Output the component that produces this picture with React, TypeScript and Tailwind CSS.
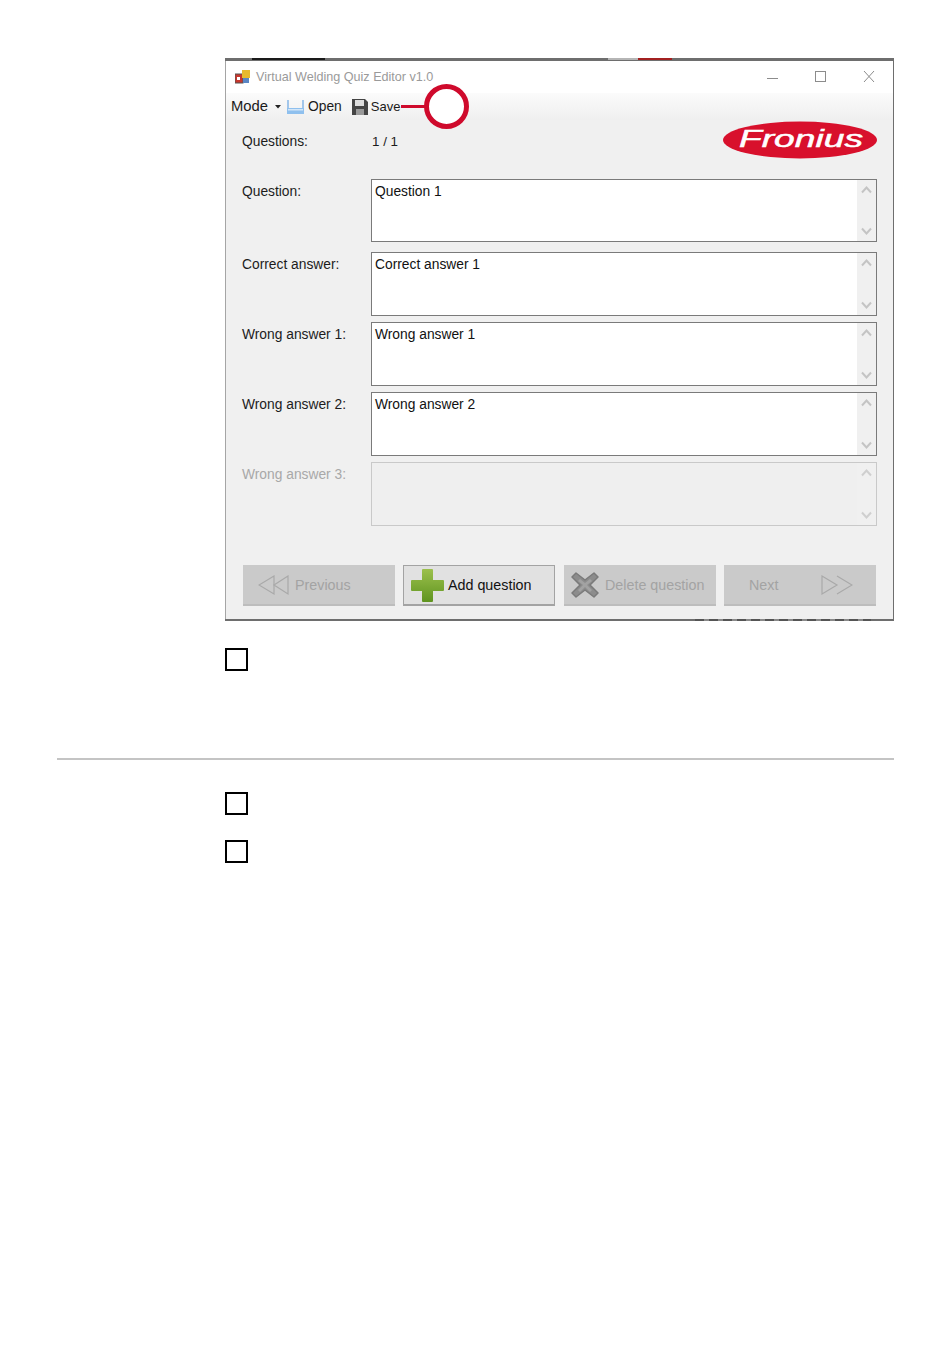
import React from "react";

const font = "font-['Liberation_Sans',Arial,sans-serif]";

function Chevron({ up, color }: { up?: boolean; color: string }) {
  return (
    <svg width="11" height="8" viewBox="0 0 11 8" fill="none">
      <path d={up ? "M1 6.5 L5.5 1.5 L10 6.5" : "M1 1.5 L5.5 6.5 L10 1.5"} stroke={color} strokeWidth="2" />
    </svg>
  );
}

function Field({
  label,
  value,
  height,
  top,
  disabled,
}: {
  label: string;
  value?: string;
  height: string;
  top: string;
  disabled?: boolean;
}) {
  return (
    <div className={`flex ${top} ${height}`}>
      <div className={`w-[129px] pt-[3px] leading-5 ${disabled ? "text-[#a8a8a8]" : "text-[#1c1c1c]"}`}>{label}</div>
      <div
        className={`flex w-[506px] border ${
          disabled ? "border-[#c9c9c9] bg-[#efefef]" : "border-[#7a7a7a] bg-white"
        }`}
      >
        <div className="flex-1 pl-[3px] pt-[2px] leading-5 text-[#111]">{value}</div>
        <div className="flex w-[19px] flex-col items-center justify-between bg-[#f0f0f0] py-[6px]">
          <Chevron up color={disabled ? "#cfcfcf" : "#c4c4c4"} />
          <Chevron color={disabled ? "#cfcfcf" : "#c4c4c4"} />
        </div>
      </div>
    </div>
  );
}

function DoubleArrow({ right }: { right?: boolean }) {
  return (
    <svg width="32" height="22" viewBox="0 0 32 22" fill="none" stroke="#a9a9a9" strokeWidth="1.2">
      {right ? (
        <>
          <path d="M1 2 L16 11 L1 20 Z" />
          <path d="M16 2 L31 11 L16 20" />
        </>
      ) : (
        <>
          <path d="M16 2 L1 11 L16 20 Z" />
          <path d="M30 2 L16 11 L30 20 Z" />
        </>
      )}
    </svg>
  );
}

function Button({
  children,
  enabled,
  className = "",
}: {
  children: React.ReactNode;
  enabled?: boolean;
  className?: string;
}) {
  return (
    <div
      className={`flex h-[41px] w-[152px] items-center text-[14.3px] ${
        enabled
          ? "border border-[#a3a3a3] border-b-2 bg-[#e1e1e1] text-[#111]"
          : "border-b-2 border-[#bdbdbd] bg-[#cacaca] text-[#a3a3a3]"
      } ${className}`}
    >
      {children}
    </div>
  );
}

function Box({ className = "" }: { className?: string }) {
  return <div className={`h-[23px] w-[23px] border-2 border-black ${className}`} />;
}

export default function App() {
  return (
    <div className={`relative h-[1369px] w-[950px] bg-white text-[13.8px] ${font}`}>
      <div className="pl-[225px] pt-[58px]">
        <div className="flex h-[563px] w-[669px] flex-col border-x border-r-[#6e6e6e] border-l-[#a5a5a5] bg-[#f0f0f0]">
          {/* top edge, with what shows behind the captured window */}
          <div className="-mx-px flex h-[3px] bg-[#6e6e6e]">
            <div className="w-[27px]" />
            <div className="h-[2px] w-[73px] bg-[#1a1a1a]" />
            <div className="w-[283px]" />
            <div className="h-[2px] w-[30px] bg-[#b5b5b5]" />
            <div className="h-[2px] w-[34px] bg-[#a32020]" />
          </div>
          {/* title bar */}
          <div className="flex h-[32px] items-center bg-white pl-[9px]">
            <svg width="15" height="15" viewBox="0 0 15 15">
              <rect x="0" y="4" width="8" height="9" fill="#c8372d" stroke="#555" />
              <rect x="2" y="7" width="3" height="3" fill="#fff" />
              <rect x="7" y="0" width="8" height="8" fill="#e8b92f" />
              <rect x="8" y="8" width="6" height="5" fill="#5a86c4" />
            </svg>
            <span className="ml-[6px] text-[12.6px] text-[#9a9a9a]">Virtual Welding Quiz Editor v1.0</span>
            <svg className="ml-auto" width="126" height="16" viewBox="0 0 126 16" fill="none" stroke="#8c8c8c" strokeWidth="1">
              <path d="M0 9.5 H11" />
              <rect x="48.5" y="2.5" width="10" height="10" />
              <path d="M97 2 L107 13 M107 2 L97 13" />
            </svg>
          </div>
          {/* tool bar */}
          <div className="flex h-[27px] items-center bg-gradient-to-b from-[#fbfbfb] to-[#efefef] pl-[5px] text-[#1a1a1a]">
            <span className="text-[14.8px]">Mode</span>
            <svg className="ml-[7px]" width="6" height="4" viewBox="0 0 6 4">
              <path d="M0 0 H6 L3 3.5 Z" fill="#222" />
            </svg>
            <svg className="ml-[6px]" width="17" height="16" viewBox="0 0 17 16">
              <path d="M1 1 V10 M16 1 V10" stroke="#7fb2e6" strokeWidth="1.4" />
              <rect x="0" y="9" width="17" height="6" fill="#8fc0ee" />
              <rect x="1" y="10" width="15" height="1.5" fill="#d3e6f8" />
            </svg>
            <span className="ml-[4px] pt-px">Open</span>
            <svg className="ml-[10px]" width="16" height="16" viewBox="0 0 16 16">
              <path d="M0 0 H13 L16 3 V16 H0 Z" fill="#444" />
              <rect x="3" y="1" width="9" height="6" fill="#ddd" />
              <rect x="4" y="10" width="8" height="6" fill="#999" />
            </svg>
            <span className="ml-[3px] text-[13px]">Save</span>
          </div>
          {/* form */}
          <div className="pl-[16px]">
            <div className="flex h-[59px] text-[#1c1c1c]">
              <div className="w-[130px] pt-[12px] leading-5">Questions:</div>
              <div className="pt-[12px] text-[13.4px] leading-5">1 / 1</div>
              <svg className="ml-auto mr-[16px] mt-px" width="154" height="38" viewBox="0 0 154 38">
                <ellipse cx="77" cy="19" rx="77" ry="18.5" fill="#d8102c" />
                <text
                  x="78"
                  y="26"
                  textAnchor="middle"
                  fill="#fff"
                  stroke="#fff"
                  strokeWidth="0.5"
                  fontSize="23"
                  fontStyle="italic"
                  fontFamily="Liberation Sans"
                  textLength="124"
                  lengthAdjust="spacingAndGlyphs"
                >
                  Fronius
                </text>
              </svg>
            </div>
            <Field label="Question:" value="Question 1" height="h-[63px]" top="" />
            <Field label="Correct answer:" value="Correct answer 1" height="h-[64px]" top="mt-[10px]" />
            <Field label="Wrong answer 1:" value="Wrong answer 1" height="h-[64px]" top="mt-[6px]" />
            <Field label="Wrong answer 2:" value="Wrong answer 2" height="h-[64px]" top="mt-[6px]" />
            <Field label="Wrong answer 3:" height="h-[64px]" top="mt-[6px]" disabled />
            {/* buttons */}
            <div className="mt-[39px] flex pl-px">
              <Button>
                <span className="ml-[15px] flex"><DoubleArrow /></span>
                <span className="ml-[5px] pt-[2px]">Previous</span>
              </Button>
              <Button enabled className="ml-[8px]">
                <svg className="ml-[7px]" width="33" height="33" viewBox="0 0 33 33">
                  <defs>
                    <linearGradient id="g" x1="0" y1="0" x2="0" y2="1">
                      <stop offset="0" stopColor="#9cc04c" />
                      <stop offset="1" stopColor="#5f9420" />
                    </linearGradient>
                  </defs>
                  <path
                    d="M11 1 Q11 0 12 0 H21 Q22 0 22 1 V11 H32 Q33 11 33 12 V21 Q33 22 32 22 H22 V32 Q22 33 21 33 H12 Q11 33 11 32 V22 H1 Q0 22 0 21 V12 Q0 11 1 11 H11 Z"
                    fill="url(#g)"
                  />
                </svg>
                <span className="ml-[4px] pt-[2px]">Add question</span>
              </Button>
              <Button className="ml-[9px]">
                <svg className="ml-[7px]" width="28" height="26" viewBox="0 0 28 26">
                  <path
                    d="M5 1 L14 8 L23 1 L27 5 L19 13 L27 21 L23 25 L14 18 L5 25 L1 21 L9 13 L1 5 Z"
                    fill="#8c8c8c"
                    stroke="#7a7a7a"
                    strokeLinejoin="round"
                    strokeWidth="1.5"
                  />
                  <path d="M9 7 L14 11 L19 7 L21 9 L16 13 L21 18 L19 20 L14 15 L9 20 L7 18 L12 13 L7 9 Z" fill="#a2a2a2" />
                </svg>
                <span className="ml-[6px] pt-[2px]">Delete question</span>
              </Button>
              <Button className="ml-[8px]">
                <span className="ml-[25px] pt-[2px]">Next</span>
                <span className="ml-[43px] flex"><DoubleArrow right /></span>
              </Button>
            </div>
          </div>
          {/* bottom edge */}
          <div className="-mx-px mt-auto flex h-[2px] bg-[#6e6e6e]">
            <div className="w-[470px]" />
            <div className="h-[2px] w-[176px] bg-[repeating-linear-gradient(90deg,#555555_0,#555555_9px,#8a8a8a_9px,#8a8a8a_14px)]" />
          </div>
        </div>
      </div>

      {/* callout */}
      <div className="absolute left-[401px] top-[105px] h-[3px] w-[26px] bg-[#cf0a2c]" />
      <div className="absolute left-[424px] top-[84px] h-[45px] w-[45px] rounded-full border-[5px] border-[#cf0a2c] bg-white" />

      <Box className="absolute left-[225px] top-[648px]" />
      <div className="absolute left-[57px] top-[758px] h-[2px] w-[837px] bg-[#c4c4c4]" />
      <Box className="absolute left-[225px] top-[792px]" />
      <Box className="absolute left-[225px] top-[840px]" />
    </div>
  );
}
